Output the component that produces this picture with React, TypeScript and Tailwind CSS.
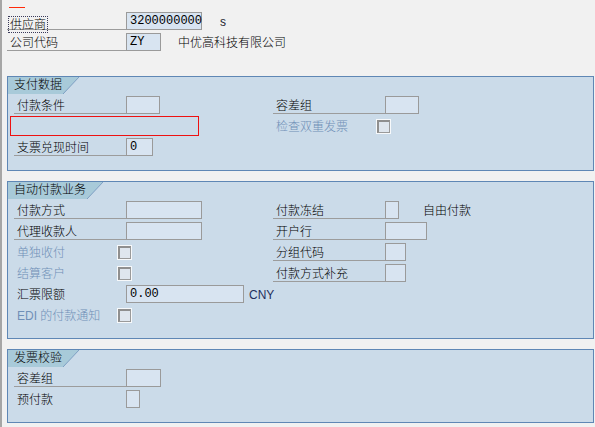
import React from "react";

const FONT = '"Liberation Sans", "Noto Sans CJK SC", sans-serif';
const MONO = '"Liberation Mono", "Noto Sans CJK SC", monospace';

function Label({ text, width = 112, underline = true, disabled = false }: { text: string; width?: number; underline?: boolean; disabled?: boolean }) {
  return (
    <div
      className={`h-[18px] shrink-0 pl-[3px] pt-[2px] text-[12px] leading-[16px] whitespace-nowrap ${
        underline ? "border-b border-[#9c9c9c]" : ""
      } ${disabled ? "text-[#6f8fb7]" : "text-black"}`}
      style={{ width }}
    >
      {text}
    </div>
  );
}

function Input({ width, value = "" }: { width: number; value?: string }) {
  return (
    <div
      className="h-[18px] shrink-0 border border-[#9a9a9a] bg-[#d8e4f1] pl-[3px] pt-px text-[12px] leading-[15px] text-black"
      style={{ width, fontFamily: MONO }}
    >
      {value}
    </div>
  );
}

function Check() {
  return (
    <div className="w-[15px] h-[15px] mt-[2px] shrink-0 border border-[#f7f9fb]">
      <div className="w-full h-full border border-[#9a9a9a] border-l-2 border-t-2 border-l-[#8f8f8f] border-t-[#8f8f8f] bg-[#dfe6ee]" />
    </div>
  );
}

function Tab({ title }: { title: string }) {
  return (
    <div className="flex h-[17px]">
      <div className="h-[17px] bg-[#a8cad9] pl-[6px] pr-[1px] text-[12px] leading-[17px] text-black whitespace-nowrap">
        {title}
      </div>
      <svg width="16" height="17" viewBox="0 0 16 17" className="shrink-0">
        <polygon points="0,0 16,0 0,17" fill="#a8cad9" />
        <line x1="16" y1="0" x2="0" y2="17" stroke="#7e9fc3" strokeWidth="1" />
      </svg>
    </div>
  );
}

function Panel({ title, children }: { title: string; children: React.ReactNode }) {
  return (
    <div className="ml-[5px] w-[587px] border border-[#5f87b5] bg-[#cbdbe9] pb-[14px]">
      <Tab title={title} />
      <div className="mt-[2px] pl-[6px] flex flex-col gap-[3px]">{children}</div>
    </div>
  );
}

function Row({ left, right }: { left?: React.ReactNode; right?: React.ReactNode }) {
  return (
    <div className="flex h-[18px]">
      <div className="flex w-[259px] shrink-0">{left}</div>
      <div className="flex">{right}</div>
    </div>
  );
}

export default function App() {
  return (
    <div
      className="w-[595px] h-[427px] overflow-hidden bg-[#f1f1f1] border-l-2 border-l-[#a6a6a6] font-light"
      style={{ fontFamily: FONT }}
    >
      <div className="pt-[7px]">
        <div className="ml-[7px] w-[16px] h-px bg-[#ff2a0a]" />
      </div>

      {/* header fields */}
      <div className="mt-[4px] ml-[5px] flex flex-col gap-[3px]">
        <div className="flex h-[18px]">
          <div className="w-[119px] h-[18px] shrink-0 border-b border-[#9c9c9c] pl-[1px]">
            <span className="inline-block h-[17px] px-[1px] pt-[1px] border border-dotted border-[#3a3a5a] text-[12px] leading-[14px] text-black">
              供应商
            </span>
          </div>
          <Input width={76} value="3200000000" />
          <div className="ml-[18px] pt-[2px] text-[12px] leading-[16px] text-[#1d1d2d]">s</div>
        </div>
        <div className="flex h-[18px]">
          <Label text="公司代码" width={119} />
          <Input width={35} value="ZY" />
          <div className="ml-[17px] pt-[2px] text-[12px] leading-[16px] text-black whitespace-nowrap">
            中优高科技有限公司
          </div>
        </div>
      </div>

      <div className="mt-[25px]">
        <Panel title="支付数据">
          <Row
            left={<><Label text="付款条件" /><Input width={34} /></>}
            right={<><Label text="容差组" /><Input width={34} /></>}
          />
          <Row
            left={<div className="-ml-[4px] -my-px w-[189px] h-[20px] border border-[#ee1111]" />}
            right={<><Label text="检查双重发票" width={103} underline={false} disabled /><Check /></>}
          />
          <Row left={<><Label text="支票兑现时间" /><Input width={27} value="0" /></>} />
        </Panel>
      </div>

      <div className="mt-[10px]">
        <Panel title="自动付款业务">
          <Row
            left={<><Label text="付款方式" /><Input width={76} /></>}
            right={
              <>
                <Label text="付款冻结" />
                <Input width={14} />
                <div className="ml-[24px] pt-[2px] text-[12px] leading-[16px] text-black whitespace-nowrap">自由付款</div>
              </>
            }
          />
          <Row
            left={<><Label text="代理收款人" /><Input width={76} /></>}
            right={<><Label text="开户行" /><Input width={42} /></>}
          />
          <Row
            left={<><Label text="单独收付" width={103} underline={false} disabled /><Check /></>}
            right={<><Label text="分组代码" /><Input width={21} /></>}
          />
          <Row
            left={<><Label text="结算客户" width={103} underline={false} disabled /><Check /></>}
            right={<><Label text="付款方式补充" /><Input width={21} /></>}
          />
          <Row
            left={
              <>
                <Label text="汇票限额" underline={false} />
                <Input width={118} value="0.00" />
                <div className="ml-[5px] pt-[2px] text-[12px] leading-[16px] text-[#1f2f5c]">CNY</div>
              </>
            }
          />
          <Row left={<><Label text="EDI 的付款通知" width={103} underline={false} disabled /><Check /></>} />
        </Panel>
      </div>

      <div className="mt-[10px]">
        <Panel title="发票校验">
          <Row left={<><Label text="容差组" /><Input width={35} /></>} />
          <Row left={<><Label text="预付款" underline={false} /><Input width={14} /></>} />
        </Panel>
      </div>
    </div>
  );
}
